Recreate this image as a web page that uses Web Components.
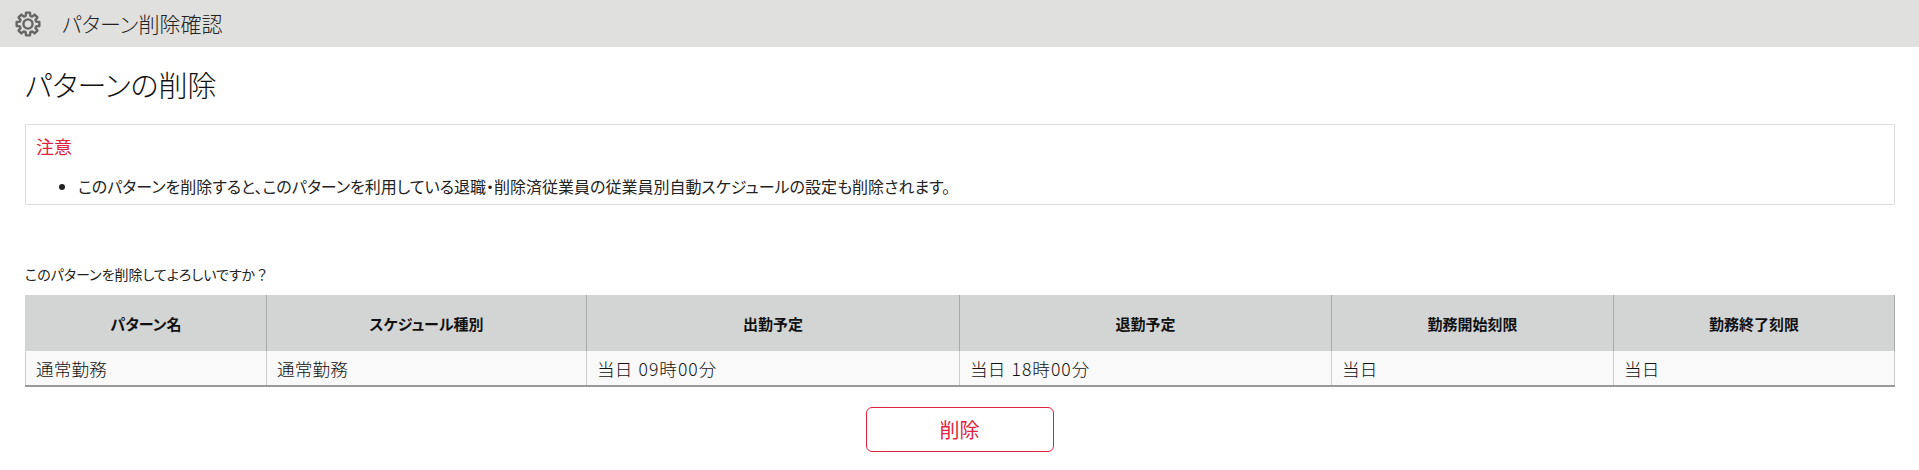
<!DOCTYPE html>
<html lang="ja">
<head>
<meta charset="utf-8">
<title>パターン削除確認</title>
<style>
  html, body { margin: 0; padding: 0; background: #fff; }
  body { font-family: "Noto Sans CJK JP", "Noto Sans", sans-serif; font-weight: 400; color: #222; font-feature-settings: "palt" 1; }
  page-body { padding: 0 24px 0 25px; }
  .fullwidth { font-feature-settings: "palt" 0; }
</style>
</head>
<body>
<title-bar>パターン削除確認</title-bar>
<page-body>
  <page-heading>パターンの削除</page-heading>
  <notice-box label="注意">このパターンを削除すると、このパターンを利用している退職・削除済従業員の従業員別自動スケジュールの設定も削除されます。</notice-box>
  <confirm-text>このパターンを削除してよろしいですか<span class="fullwidth">？</span></confirm-text>
  <pattern-table></pattern-table>
  <danger-button>削除</danger-button>
</page-body>
<script>
class TitleBar extends HTMLElement {
  constructor() {
    super();
    let n = this.attachShadow({ mode: "open" });
    n.innerHTML = `
      <style>
        :host { display: flex; align-items: center; height: 47px; background: #e0e0de; padding-left: 15px; color: #222; font-size: 21px; font-weight: 300; line-height: 47px; }
        svg { width: 26px; height: 26px; margin-right: 21px; flex: none; }
      </style>
      <svg viewBox="-13 -13 26 26" fill="none" stroke="#666" stroke-width="2.4" stroke-linejoin="round">
        <polygon points="8.17,-2.34 11.33,-2 11.33,2 8.17,2.34 7.43,4.12 9.42,6.6 6.6,9.42 4.12,7.43 2.34,8.17 2,11.33 -2,11.33 -2.34,8.17 -4.12,7.43 -6.6,9.42 -9.42,6.6 -7.43,4.12 -8.17,2.34 -11.33,2 -11.33,-2 -8.17,-2.34 -7.43,-4.12 -9.42,-6.6 -6.6,-9.42 -4.12,-7.43 -2.34,-8.17 -2,-11.33 2,-11.33 2.34,-8.17 4.12,-7.43 6.6,-9.42 9.42,-6.6 7.43,-4.12" />
        <circle r="4.6" />
      </svg>
      <slot></slot>
    `;
  }
}
class PageBody extends HTMLElement {
  constructor() {
    super();
    let n = this.attachShadow({ mode: "open" });
    n.innerHTML = `
      <style>
        :host { display: block; }
      </style>
      <slot></slot>
    `;
  }
}
class PageHeading extends HTMLElement {
  constructor() {
    super();
    let n = this.attachShadow({ mode: "open" });
    n.innerHTML = `
      <style>
        :host { display: block; font-size: 29px; font-weight: 300; line-height: 40px; margin-top: 17px; color: #111; }
      </style>
      <slot></slot>
    `;
  }
}
class NoticeBox extends HTMLElement {
  constructor() {
    super();
    let n = this.attachShadow({ mode: "open" });
    n.innerHTML = `
      <style>
        :host { display: block; box-sizing: border-box; height: 81px; margin-top: 20px; border: 1px solid #ddd; padding: 9px 10px 0; }
        .label { color: #e0223f; font-size: 18px; line-height: 24px; }
        ul { margin: 16px 0 0; padding: 0 0 0 42px; font-size: 16px; line-height: 24px; color: #222; }
      </style>
      <div class="label"></div>
      <ul><li><slot></slot></li></ul>
    `;
    n.querySelector(".label").textContent = this.getAttribute("label");
  }
}
class ConfirmText extends HTMLElement {
  constructor() {
    super();
    let n = this.attachShadow({ mode: "open" });
    n.innerHTML = `
      <style>
        :host { display: block; font-size: 14px; line-height: 20px; margin-top: 59px; color: #222; }
      </style>
      <slot></slot>
    `;
  }
}
class PatternTable extends HTMLElement {
  constructor() {
    super();
    let heads = ["パターン名", "スケジュール種別", "出勤予定", "退勤予定", "勤務開始刻限", "勤務終了刻限"];
    let cells = ["通常勤務", "通常勤務", `当日 <span class="t">09時00分</span>`, `当日 <span class="t">18時00分</span>`, "当日", "当日"];
    let widths = [242, 320, 373, 372, 282, 281];
    let n = this.attachShadow({ mode: "open" });
    n.innerHTML = `
      <style>
        :host { display: block; margin-top: 11px; }
        table { width: 100%; table-layout: fixed; border-collapse: separate; border-spacing: 0; border-bottom: 2px solid #999; }
        th { height: 56px; padding: 0; background: #d3d5d4; border-right: 1px solid #aaa; font-size: 15px; font-weight: 700; color: #111; }
        td { height: 34px; padding: 0 10px; background: #f9f9f9; border-right: 1px solid #ccc; font-size: 17.6px; font-weight: 300; word-spacing: 2px; letter-spacing: 0.15px; color: #111; }
        .t { letter-spacing: 1px; }
        th:first-child, td:first-child { border-left: 1px solid #ccc; }
        th:first-child { border-left-color: #d3d5d4; }
      </style>
      <table>
        <colgroup>${widths.map((w) => `<col style="width:${w}px">`).join("")}</colgroup>
        <tr>${heads.map((h) => `<th>${h}</th>`).join("")}</tr>
        <tr>${cells.map((c) => `<td>${c}</td>`).join("")}</tr>
      </table>
    `;
  }
}
class DangerButton extends HTMLElement {
  constructor() {
    super();
    let n = this.attachShadow({ mode: "open" });
    n.innerHTML = `
      <style>
        :host { display: flex; justify-content: center; margin-top: 20px; padding-right: 1px; }
        button { box-sizing: border-box; width: 188px; height: 45px; padding: 0; background: #fff; border: 1px solid #e0223f; border-radius: 6px; color: #e0223f; font: inherit; font-size: 20px; font-weight: 400; }
      </style>
      <button><slot></slot></button>
    `;
  }
}
customElements.define("title-bar", TitleBar);
customElements.define("page-body", PageBody);
customElements.define("page-heading", PageHeading);
customElements.define("notice-box", NoticeBox);
customElements.define("confirm-text", ConfirmText);
customElements.define("pattern-table", PatternTable);
customElements.define("danger-button", DangerButton);
</script>
</body>
</html>
